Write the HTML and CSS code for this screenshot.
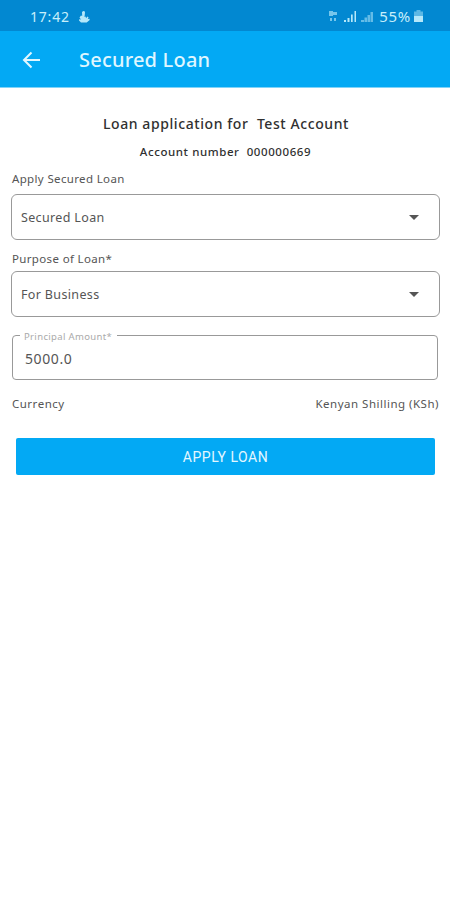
FILE: index.html
```html
<!DOCTYPE html>
<html lang="en">
<head>
<meta charset="utf-8">
<title>Secured Loan</title>
<link rel="stylesheet" href="styles.css">
</head>
<body>
<div class="status">
  <span class="clock">17:42</span>
  <svg class="touch" width="12" height="13" viewBox="0 0 12 13"><path d="M4 2q2.500-2 3 .5L6.500 7l1.200-.5L8 8.200l1.500-1.700 1 .8-.7 1.700 1.700-.3.200 1.300-3 2.500H3L1 10.500l.2-1.200 1.800.2L1.500 7.500 3 5.500l1.200.5z"/></svg>
  <div class="indicators">
    <svg class="network" width="9" height="13" viewBox="0 0 9 13"><path d="M0 1h4v1h4v3H4v1H0zM1 8h2v3H1zM5 8h2v3H5z"/></svg>
    <svg class="signal" width="13" height="13" viewBox="0 0 13 13"><path d="M0 10h2v2H0zM3.500 8h2v4h-2zM7 4.500h1.700V12H7zM10.500 1H12v11h-1.500z"/></svg>
    <svg class="signal weak" width="13" height="13" viewBox="0 0 13 13"><path d="M0 10h3v2H0zM3.500 7.500h2.500V12H3.500zM6.500 5H9v7H6.500zM9.500 2H12v10H9.500z"/></svg>
    <span class="percent">55%</span>
    <svg class="battery" width="9" height="13" viewBox="0 0 9 13"><path opacity=".5" d="M2.500 0h4v1.500H9V6H0V1.500h2.500z"/><path d="M0 6h9v6H0z"/></svg>
  </div>
</div>
<header class="appbar">
  <svg class="back" width="18" height="18" viewBox="0 0 18 18"><path d="M18 9H2M9.500 1.500 2 9l7.500 7.500"/></svg>
  <h1 class="title">Secured Loan</h1>
</header>
<main class="form">
  <p class="heading">Loan application for&nbsp; Test Account</p>
  <p class="account">Account number&nbsp; 000000669</p>
  <p class="label label-product">Apply Secured Loan</p>
  <div class="select"><span class="product">Secured Loan</span><svg class="caret" width="10" height="5" viewBox="0 0 10 5"><path d="M0 0h10L5 5z"/></svg></div>
  <p class="label label-purpose">Purpose of Loan*</p>
  <div class="select"><span class="purpose">For Business</span><svg class="caret" width="10" height="5" viewBox="0 0 10 5"><path d="M0 0h10L5 5z"/></svg></div>
  <fieldset class="amount"><legend>Principal Amount*</legend><span class="value">5000.0</span></fieldset>
  <div class="currency"><span class="currency-label">Currency</span><span class="currency-name">Kenyan Shilling (KSh)</span></div>
  <button class="apply">APPLY LOAN</button>
</main>
</body>
</html>
```
FILE: styles.css
```css
* { box-sizing: border-box; }
body { margin: 0; background: #fff; font-family: "Noto Sans", sans-serif; color: #555; }
p, h1 { margin: 0; font-weight: 400; white-space: nowrap; }
svg { display: block; flex: none; }
.status { height: 31px; background: #0288d1; display: flex; align-items: center; padding: 1px 27px 0 30px; color: #c8effb; fill: #b5e8fa; }
.clock { font-size: 14px; letter-spacing: .8px; line-height: 20px; padding-top: 1px; }
.touch { margin-left: 8px; }
.indicators { display: flex; align-items: center; margin-left: auto; }
.network { opacity: .65; margin-right: 6px; }
.signal { margin-right: 4px; }
.weak { opacity: .55; margin-right: 5px; }
.percent { font-size: 15px; line-height: 20px; letter-spacing: .7px; }
.battery { margin-left: 3px; }
.appbar { height: 57px; background: #03a9f4; border-bottom: 1px solid #81d3f8; display: flex; align-items: center; padding: 1px 22px 0 22px; }
.back { fill: none; stroke: #e1f7ff; stroke-width: 2; }
.title { margin-left: 39px; font-size: 20px; line-height: 28px; letter-spacing: .2px; color: #dff6ff; font-weight: 500; }
.form { padding: 26px 10px 0 11px; }
.heading { padding-left: 1px; font-size: 14px; line-height: 20px; letter-spacing: .58px; color: #303030; font-weight: 500; text-align: center; }
.account { margin-top: 9px; font-size: 11.500px; line-height: 18px; letter-spacing: .58px; color: #303030; font-weight: 500; text-align: center; }
.label { padding-left: 1px; font-size: 11.500px; line-height: 18px; letter-spacing: .35px; }
.label-product { margin-top: 9px; }
.label-purpose { margin-top: 10px; }
.select { height: 46px; margin-top: 3px; border: 1px solid #999; border-radius: 6px; display: flex; align-items: center; justify-content: space-between; padding: 0 20px 0 9px; font-size: 12.500px; letter-spacing: .35px; }
.label-product + .select { margin-top: 6px; }
.caret { fill: #555; }
.amount { min-width: 0; height: 52px; margin: 11px 2px 0 1px; border: 1px solid #999; border-radius: 4px; padding: 6px 12px 0; }
.amount legend { margin-left: -5px; padding: 3px 5px 0 4px; font-size: 9.500px; line-height: 12px; letter-spacing: .35px; color: #aaa; }
.value { display: block; font-size: 14px; line-height: 20px; letter-spacing: .6px; }
.currency { margin: 15px 1px 0 0; padding: 0 0 0 1px; display: flex; justify-content: space-between; font-size: 11.500px; line-height: 18px; letter-spacing: .5px; }
.apply { display: block; width: 419px; height: 37px; margin: 25px 0 0 5px; padding: 0; border: 0; border-radius: 2px; background: #03a9f4; color: #e3f7ff; font: 400 14px/20px Roboto, sans-serif; letter-spacing: .5px; }
```
